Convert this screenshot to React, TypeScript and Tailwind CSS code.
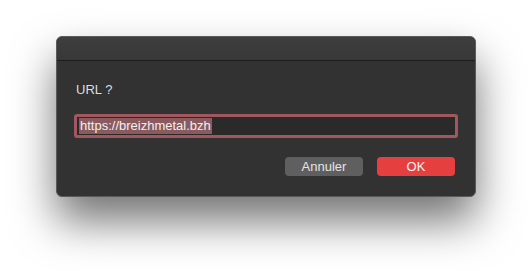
import React from 'react';

const App: React.FC = () => {
  return (
    <div className="w-[532px] h-[271px] bg-white pt-[36px] pl-[56px] font-['Liberation_Sans',sans-serif]">
      {/* Dialog window */}
      <div className="w-[420px] h-[161px] rounded-[6px] bg-[#323232] border border-[#5a5a5a] shadow-[0_24px_44px_rgba(0,0,0,0.55)] overflow-hidden flex flex-col">
        <div className="h-[24px] bg-gradient-to-b from-[#3e3e3e] to-[#383838] border-b border-[#1c1c1c]" />
        <div className="flex-1 flex flex-col px-[17px]">
          <div className="mt-[21px] pl-[2px] text-[13px] leading-[16px] text-[#dedede]">URL ?</div>
          <div className="mt-[16px] h-[24px] rounded-[3px] bg-[#a0585e] p-[3px]">
            <div className="h-full bg-[#2a2a2a] flex items-center px-[2px]">
              <span className="bg-[#8b5a5f] text-[#f0f0f0] text-[13px] leading-[16px] px-[1px]">
                https://breizhmetal.bzh
              </span>
            </div>
          </div>
          <div className="mt-[19px] flex justify-end gap-[14px] pr-[3px]">
            <button className="w-[78px] h-[19px] rounded-[4px] bg-[#5f5f5f] text-[13px] leading-[19px] text-[#e4e4e4]">
              Annuler
            </button>
            <button className="w-[78px] h-[19px] rounded-[4px] bg-[#e5403f] text-[13px] leading-[19px] text-[#f4f4f4]">
              OK
            </button>
          </div>
        </div>
      </div>
    </div>
  );
};

export default App;
